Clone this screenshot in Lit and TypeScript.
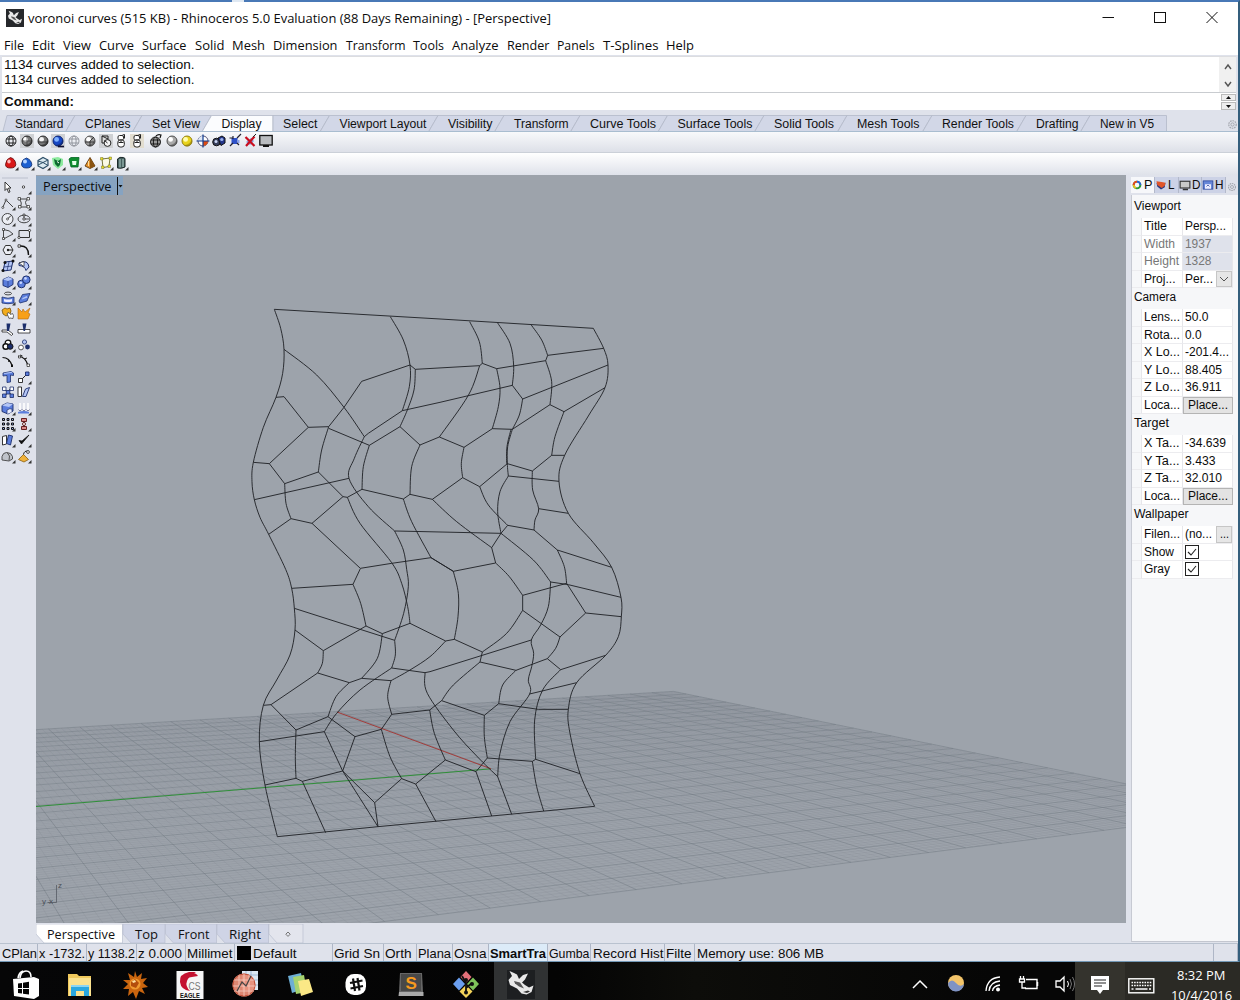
import { LitElement, html, svg, css, nothing } from "lit";
import { customElement } from "lit/decorators.js";

type Pt = [number, number];

/* One line of text set to an exact width. */
const fit = (s: string, w: number, size = 12, h = 16, cls = "") => html`<svg
  class="fit ${cls}" width=${w} height=${h} viewBox="0 0 ${w} ${h}"><text x="0" y=${h / 2 + size * 0.36}
  font-size=${size} textLength=${w} lengthAdjust="spacingAndGlyphs">${s}</text></svg>`;

const icon = (body: unknown, size = 16) => html`<svg class="icon" width=${size} height=${size} viewBox="0 0 16 16">${body}</svg>`;

/* ---------- small drawing parts ---------- */
const ball = (fill: string, hi: string, dark = "#222") => svg`
  <circle cx="8" cy="8" r="5" fill=${fill} stroke=${dark} stroke-width="0.9"/>
  <path d="M5 12.300A5 5 0 0 0 12.600 6.200Q12 11 5 12.300Z" fill=${dark} opacity=".55"/>
  <ellipse cx="6.600" cy="6.400" rx="2.400" ry="2.300" fill=${hi}/>`;
const globe = (c: string) => svg`<g fill="none" stroke=${c} stroke-width="0.9">
  <circle cx="8" cy="8" r="5"/><ellipse cx="8" cy="8" rx="2.100" ry="5"/><path d="M3.400 6h9.200M3.400 10h9.200"/></g>`;
const pressed = svg`<rect x="1" y="1" width="14" height="14" fill="#cfd1d4"/>`;
const corner = svg`<path d="M15.500 12v3.500H12z" fill="#333"/>`;
const capsules = svg`<g fill="#fff" stroke="#222" stroke-width="1">
  <rect x="5" y="2.500" width="5.500" height="4.500" rx="1.500"/><rect x="4.800" y="7" width="6.500" height="7" rx="2.400"/><path d="M5.500 9.500h5M8 7v2.500M9.500 2l2-.5v4" fill="none"/></g>`;

const displayIcons = [
  globe("#111"),
  svg`${pressed}${ball("#777", "#fff")}<path d="M8 3v10M3 8h10" stroke="#333" stroke-width=".6"/>`,
  svg`${ball("#777", "#f4f4f4")}<path d="M3 9h10" stroke="#222" stroke-width=".7"/>`,
  svg`${pressed}${ball("#1747c4", "#7fb0ff", "#0a1f66")}<path d="M8 13.500h6" stroke="#113" stroke-width="1.600"/>`,
  globe("#8b8f96"),
  svg`${ball("#9a9a9a", "#fff", "#444")}<path d="M8 8l4-4M8 8v5M3 9h9" stroke="#222" stroke-width=".8"/>`,
  svg`${pressed}<path d="M4 3h6v7H4z" fill="#ddd" stroke="#222"/><path d="M4 3l6 3" stroke="#222"/><circle cx="9.500" cy="10" r="3.400" fill="#f4f4f4" stroke="#222"/><path d="M9.500 10l-3-2.500" stroke="#222"/>`,
  capsules,
  svg`<rect x="1" y="1" width="14" height="14" fill="#e2ddcf"/>${capsules}`,
];
const displayIcons2 = [
  svg`<circle cx="7.500" cy="9" r="5" fill="#999"/><g transform="translate(-.5 1)">${globe("#111")}</g><path d="M8 3q2-2 5-1l-1 3" fill="none" stroke="#111" stroke-width="1.200"/>`,
  svg`${ball("#aaa", "#fff", "#444")}`,
  svg`${ball("#e8d31c", "#fffcae", "#8a7608")}`,
  svg`<circle cx="8" cy="8" r="5" fill="#fff" stroke="#557"/><path d="M8 8V3A5 5 0 0 0 3 8z" fill="#dde6f5"/><path d="M8 8v5a5 5 0 0 0 5-5z" fill="#dc4b12"/><path d="M8 1.500v13M1.500 8h13" stroke="#123c8f" stroke-width="1.200"/>`,
  svg`<circle cx="5.500" cy="9" r="3.800" fill="#39415e" stroke="#111"/><circle cx="5" cy="8.500" r="1.500" fill="#cdd8f5"/><path d="M7 5l4-2 3 2v5l-4 2.500z" fill="#24368a" stroke="#111"/><circle cx="10.800" cy="6.500" r="1.600" fill="#9db3ec"/>`,
  svg`<path d="M4.500 5h6v6h-6z" fill="#2e51c8"/><path d="M10 5l4-4M2.500 5h3M3 13l3-3M6 3v3M10 10l2 2" stroke="#223" stroke-width="1.200"/><path d="M11 7h1.500v3H11z" fill="#8aa4ef"/>`,
  svg`<path d="M4 9l4 3 4-4-3-3z" fill="#8aa0dc"/><path d="M3.500 4l9 9M12.500 3.500L4 13" stroke="#c80d1e" stroke-width="2.200"/><path d="M11 4l3-3" stroke="#222"/>`,
  svg`<rect x="1.800" y="2.500" width="12.400" height="9.500" fill="#b9bcc0" stroke="#111" stroke-width="1.300"/><path d="M5 14h6v-2H5z" fill="#111"/>`,
];
const shadeIcons = [
  svg`<path d="M7.500 2.500Q12.500 4 12.800 9.500Q12.500 13 7.500 13T2.500 9.500Q3 4 7.500 2.500Z" fill="#d91818" stroke="#5e0808" stroke-width=".8"/><ellipse cx="6" cy="6.500" rx="1.700" ry="2" fill="#ffb9b9"/>`,
  svg`<path d="M7.500 3Q12.500 5 12.800 9.500Q12.500 13 7.500 13T2.500 9Q3 4 7.500 3Z" fill="#1c5fd0" stroke="#0a2767" stroke-width=".8"/><ellipse cx="6" cy="6.500" rx="2" ry="1.900" fill="#b3d2ff"/>`,
  svg`<path d="M3 5.500l5-3 5 2.500v5.500l-5 3-5-2.500z" fill="#dbe9f0" stroke="#2e4f68" stroke-width="1.200"/><path d="M3 10l10-5M3 6l5 1.500 5 3" stroke="#2e4f68" fill="none"/>`,
  svg`<path d="M2 3l6-1 5 2v6l-5 4-5-4z" fill="#8dea9f"/><path d="M4 4l4 2 3-2-1 6-2 2-3-3z" fill="#0d6b31"/><path d="M7 6.500l2 1.500" stroke="#fff"/>`,
  svg`<path d="M3 4l2-1.500h8L12 12H5z" fill="#0f8d2f" stroke="#062" stroke-width=".8"/><path d="M6 6h4.500l-.5 4H6.500z" fill="#e4ffe9"/>`,
  svg`<path d="M8 2.500l5 8.500-5 2.500-5-2.500z" fill="#e3902a" stroke="#4a2b08" stroke-width=".8"/><path d="M8 2.500v11l5-2.500z" fill="#8a5412"/><path d="M6.500 6v5" stroke="#ffdd9b"/>`,
  svg`<path d="M4 4l8-1-1 8.500-6 1z" fill="#fbfae4" stroke="#55540e" stroke-width=".8"/><g fill="#e8e02a" stroke="#55540e" stroke-width=".4"><path d="M2.500 2.500H5V5H2.500zM11 2h2.500v2.500H11zM3.500 11H6v2.500H3.500zM10 10h2.500v2.500H10z"/></g>`,
  svg`<path d="M4.500 4q2-2.500 6-1.500l1.500 1v8.500q-3.500 2-7.500 1z" fill="#46605f" stroke="#1c2a2a"/><path d="M7 4v8.500M10 4v8" stroke="#a8c6c0" stroke-width="1.100"/>`,
];

const blue = "#5b7ddc", lb = "#b4c6f6", nv = "#1c2e6b";
const toolIcons = [
  svg`<path d="M5 3v8.500l2-2 1.500 4 1.500-.6L8.500 9H11z" fill="#fff" stroke="#222" stroke-width=".9"/>`,
  svg`<circle cx="7.500" cy="8" r="1.200" fill="#fff" stroke="#222" stroke-width=".8"/>${corner}`,
  svg`<path d="M2.500 13l3.500-8 7 7" fill="none" stroke="#333" stroke-width=".9"/><circle cx="6" cy="5" r="1" fill="#fff" stroke="#222" stroke-width=".7"/><circle cx="2.800" cy="12.500" r="1" fill="#fff" stroke="#222" stroke-width=".7"/>${corner}`,
  svg`<path d="M4 4h8Q7 7 12 12H4Q7 8 3 4" fill="none" stroke="#333" stroke-width=".9"/><g fill="#fff" stroke="#222" stroke-width=".7"><path d="M2 2.500h2.500V5H2zM11 2.500h2.500V5H11zM2.500 10.500H5V13H2.500zM11 10.500h2.500V13H11z"/></g>${corner}`,
  svg`<circle cx="7.500" cy="8" r="5.500" fill="#eceef4" stroke="#333" stroke-width=".9"/><path d="M7.500 8l3.500-3.500" stroke="#222"/><circle cx="7.500" cy="8" r="1" fill="#fff" stroke="#222" stroke-width=".7"/>${corner}`,
  svg`<ellipse cx="8" cy="8" rx="6" ry="3.800" fill="none" stroke="#333" stroke-width=".9"/><path d="M8 4v4h5" fill="none" stroke="#333" stroke-width=".8"/><circle cx="8" cy="8" r="1.200" fill="#fff" stroke="#222" stroke-width=".8"/><circle cx="8" cy="4" r="1.100" fill="#fff" stroke="#222" stroke-width=".8"/>${corner}`,
  svg`<path d="M3.500 13V3.500Q10 4 13 8L3.500 13" fill="none" stroke="#333" stroke-width=".9"/><path d="M2.500 2.500h2v2h-2zM2.500 11.500h2v2h-2z" fill="#fff" stroke="#222" stroke-width=".7"/>${corner}`,
  svg`<path d="M3 4.500h10.500v7H3z" fill="none" stroke="#333"/><circle cx="3" cy="11.500" r="1.100" fill="#fff" stroke="#222" stroke-width=".8"/><circle cx="13.500" cy="4.500" r="1.100" fill="#fff" stroke="#222" stroke-width=".8"/>${corner}`,
  svg`<path d="M3 8l2.500-4.500h5L13 8l-2.500 4.500h-5z" fill="#eceef4" stroke="#333"/><path d="M8 8h5" stroke="#222"/><circle cx="8" cy="8" r="1.200" fill="#222"/>${corner}`,
  svg`<path d="M4 4Q12.500 3.500 12.500 13" fill="none" stroke="#111" stroke-width="1.400"/><path d="M2 2.800h2.400v2.400H2z" fill="#fff" stroke="#222" stroke-width=".8"/>${corner}`,
  svg`<path d="M5 4l8-1-2 9-8 1z" fill=${lb} stroke=${nv}/><path d="M9 4L7 13M4 9l8-1" stroke=${nv} stroke-width=".7"/><g fill="#111"><circle cx="5" cy="4.500" r="1.500"/><circle cx="13" cy="3" r="1.500"/><circle cx="3" cy="12.500" r="1.500"/></g>${corner}`,
  svg`<path d="M3 5Q12 1 13 9L10 12.500Q9 8 3 7.500z" fill=${lb} stroke=${nv}/><path d="M3 5l5-1.500v5z" fill="#fff" stroke="#222" stroke-width=".7"/>${corner}`,
  svg`<path d="M3 5.500l5.500-2.500L13 5v5.500L8 13.500l-5-2z" fill=${blue} stroke=${nv} stroke-width=".9"/><path d="M3 5.500l5.500-2.500L13 5 8 7z" fill=${lb}/><path d="M8 7v6" stroke=${nv} stroke-width=".6"/>${corner}`,
  svg`<circle cx="5.500" cy="10" r="3.800" fill=${blue} stroke=${nv}/><circle cx="10.300" cy="5.700" r="3.800" fill=${blue} stroke=${nv}/><circle cx="4.800" cy="8.800" r="1.300" fill="#c9d7ff"/><circle cx="9.500" cy="4.400" r="1.300" fill="#c9d7ff"/>${corner}`,
  svg`<ellipse cx="8" cy="3.500" rx="3.500" ry="1.400" fill="none" stroke="#222" stroke-width=".8"/><path d="M2 7q6 2.500 12 0v6q-6 1.500-12 0z" fill=${blue} stroke=${nv} stroke-width=".8"/><path d="M4 9q4 1.200 8 0v2.500q-4 1-8 0z" fill="#eef"/>${corner}`,
  svg`<path d="M3 11l3.500-6.500 7.500-1-3 7.500-7 2z" fill=${blue} stroke=${nv} stroke-width=".8"/><path d="M6 9.500l5.500-2-.8-1.500L6.500 8z" fill=${lb}/>${corner}`,
  svg`<path d="M2 5l3-2 2 1 3-1 1 3-1 3-4 2-3-2z" fill="#f2ac1d" stroke="#7a5305" stroke-width=".8"/><path d="M7 8.500l2-1 1.500 2 2-1 1 2-.5 3-3-.5-1 .5z" fill="#fff" stroke="#444" stroke-width=".8"/>`,
  svg`<path d="M2 3l4 4 1-3 2 3 5-4-2 5 2 1-2 5H2z" fill="#f8a019" stroke="#b4660c" stroke-width=".6"/>`,
  svg`<path d="M2 9h6l5 4-1.500 1.500L7 11H2z" fill="#fff" stroke="#222" stroke-width=".8"/><path d="M6.500 2.500h4L9 10H7z" fill=${nv}/>`,
  svg`<path d="M2 8.500h12V12H2z" fill="#fff" stroke="#222" stroke-width=".8"/><path d="M6.500 2.500h4L9 10H7.500z" fill=${nv}/>`,
  svg`<circle cx="8" cy="6" r="2.800" fill="#fff" stroke="#111" stroke-width="1.300"/><circle cx="5.800" cy="9.500" r="2.800" fill="#fff" stroke="#111" stroke-width="1.500"/><circle cx="10.200" cy="9.500" r="2.800" fill=${nv} stroke="#111"/>${corner}`,
  svg`<circle cx="8.500" cy="5" r="2.100" fill=${lb} stroke=${nv} stroke-width=".8"/><circle cx="5" cy="10.500" r="2.400" fill="#fff" stroke="#333" stroke-width=".8"/><circle cx="11.500" cy="10" r="2.400" fill=${nv}/>`,
  svg`<path d="M2.500 4.500q7 0 9.500 8" fill="none" stroke="#111" stroke-width="1.200"/><circle cx="9" cy="8" r="1" fill="#111"/><path d="M11 11.500h2V14h-2z" fill="#111"/>`,
  svg`<path d="M2 3q8 1 10 10" fill="none" stroke="#111" stroke-width="1.200"/><path d="M4 2l2.500 1M8 6l3-1" stroke="#222"/><path d="M2.500 3h2v2h-2zM11 11h2.500v2.500H11z" fill="#fff" stroke="#222" stroke-width=".7"/>`,
  svg`<path d="M3 4l8-1.500 2.500 1.500v2.500l-3-.5v7l-3.500.5V6.500l-4 .5z" fill=${blue} stroke=${nv} stroke-width=".8"/><path d="M3.500 4.200l8-1.400 1 .9-8 1.400z" fill=${lb}/>`,
  svg`<path d="M5 11l6-6" stroke="#222"/><path d="M2.500 9.500h4V13.500h-4z" fill="#fff" stroke="#222" stroke-width=".9"/><path d="M9.500 3h3.500v3.500H9.500z" fill=${blue} stroke=${nv} stroke-width=".9"/>${corner}`,
  svg`<path d="M4 5l8 6M11 4l-6 8" stroke="#222"/><g stroke=${nv} stroke-width=".8"><path d="M2.500 3H6v3.500H2.500zM10 3h3.500v3.500H10z" fill="#fff"/><path d="M6.300 6.500h3.500V10H6.300zM2.500 10H6v3.500H2.500zM10 10h3.500v3.500H10z" fill=${blue}/></g>`,
  svg`<path d="M2 3h3.500v9.500H2z" fill="#fff" stroke="#222" stroke-width=".9"/><path d="M9.500 5l4-1.500-3.500 9H6.500z" fill=${lb} stroke=${nv} stroke-width=".9"/>`,
  svg`<path d="M2 5.500L7 3l6 1v7l-5 3-6-2.500z" fill=${blue} stroke=${nv} stroke-width=".9"/><path d="M2 5.500L7 3l6 1-4 3z" fill=${lb}/><path d="M7 14v-4q3-2 5-1v3" fill="#e7ecff" stroke=${nv} stroke-width=".7"/>${corner}`,
  svg`<path d="M2 12q6-2 11 0v1.500H2z" fill=${blue}/><path d="M4 3v7M8 3v7M12 3v7" stroke="#fff" stroke-width="1.600"/><path d="M2.500 9.500L4 11l1.500-1.500M6.500 9.500L8 11l1.500-1.500M10.500 9.500L12 11l1.500-1.500" stroke="#668" fill="none" stroke-width=".8"/>${corner}`,
  svg`<g fill="#8ea5e6" stroke="#111" stroke-width="1"><path d="M2.500 2.500h2v2h-2zM7 2.500h2v2H7zM11.500 2.500h2v2h-2zM2.500 7h2v2h-2zM7 7h2v2H7zM11.500 7h2v2h-2zM2.500 11.500h2v2h-2zM7 11.500h2v2H7zM11.500 11.500h2v2h-2z"/></g>${corner}`,
  svg`<path d="M8 2v12" stroke="#222"/><path d="M5.500 2.500h5v3h-5zM5.500 10.500h5v3h-5z" fill="#d98888" stroke="#5a1010" stroke-width=".9"/><circle cx="8" cy="8" r="1.500" fill="#fff" stroke="#5a1010" stroke-width=".9"/>${corner}`,
  svg`<path d="M2.500 4.500l4-1v8.500l-4 1z" fill="#fff" stroke="#222" stroke-width=".9"/><path d="M8.500 3l4 1-2 9-4-1.500z" fill=${blue} stroke=${nv} stroke-width=".9"/>${corner}`,
  svg`<path d="M3 8.500l2.500 3.500 7.500-9-7 6z" fill="#111" stroke="#111" stroke-width=".8"/>${corner}`,
  svg`<path d="M2 8.500q1-4 4.500-4 5 0 6 4v2.500l-3.500 2-7-1z" fill="#bfc3ca" stroke="#444" stroke-width=".9"/><path d="M7 4.500q4 3 2 8" stroke="#555" fill="none"/>${corner}`,
  svg`<path d="M2.500 11.500l5-5 5 5-4.500 2.500z" fill="#f0b23a" stroke="#8a5f10" stroke-width=".8"/><path d="M7.500 6.500q.5-4 5-3.500" fill="none" stroke="#222" stroke-width="1"/><circle cx="12" cy="4" r="1.400" fill="#fff" stroke="#222" stroke-width=".8"/>${corner}`,
];

/* ---------- ground grid ---------- */
const O: Pt = [491, 768.5], VA: Pt = [3577, 517], VB: Pt = [-180, 517];
const SA = 0.149, SB = 0.293, HALF = 70;
const ground = (u: number, v: number): Pt => {
  const a = (u / HALF) * SA, b = (v / HALF) * SB, w = 1 + a + b;
  return [(O[0] + a * VA[0] + b * VB[0]) / w, (O[1] + a * VA[1] + b * VB[1]) / w];
};
const seg = (p: Pt, q: Pt) => `M${p[0].toFixed(1)} ${p[1].toFixed(1)}L${q[0].toFixed(1)} ${q[1].toFixed(1)}`;
let minor = "", major = "";
for (let i = -HALF; i <= HALF; i++) {
  const d = seg(ground(i, -HALF), ground(i, HALF)) + seg(ground(-HALF, i), ground(HALF, i));
  if (i % 5 === 0) major += d; else minor += d;
}

/* ---------- voronoi curves, in thirds of a pixel from (240,300) ---------- */
const straight = `103,28 600,57 1060,85|112,1610 414,1580 1064,1519|365,244 510,195 526,208 719,197|365,244 312,322 266,380|
487,332 600,307 817,256|108,292 132,290 205,382 266,380|205,382 88,491|40,487 88,491 134,551 235,516 309,590 322,592 366,568|
266,385 388,436 480,380 540,435 598,411|366,568 490,597 510,583 577,598|487,332 385,400 373,410|43,599 327,535|464,693 783,700|
86,703 153,656 216,670 309,590|216,670 361,805 455,790 573,773 640,814|719,197 727,190 770,206 917,182 923,166 1091,145|
757,386 817,388 930,314 972,335 1095,263|817,256 848,297 1104,195|974,466 935,466 877,513 802,491 719,560 668,533 577,598|
805,528 957,544|803,676 882,690 952,750 1115,802|896,626 985,640|598,411 672,442 757,386|803,676 783,700 755,743 767,789 640,814|
848,886 980,850|932,846 985,854 1143,892|848,886 848,931 960,1011|980,850 1037,939 1144,950|1037,939 960,1011|
922,1076 962,1109 1097,1066|922,1076 828,1111 720,1086 727,1056 643,1018 617,1023 510,970|874,1020 570,1115 555,1118 455,1104|
869,1182 1010,1148|605,1202 733,1246 776,1211 895,1228 985,1228|742,1374 877,1384 887,1378 1020,1421|742,1374 708,1415 616,1380|
708,1415 755,1548|773,1430 815,1543|605,1202 569,1230 455,1243 424,1288|616,1380 527,1452 485,1436|527,1452 588,1565|
361,806 339,853 155,865|378,978 250,1052 165,990|378,978 427,1001 510,970|70,1216 93,1214 233,1119 328,1148 365,1135 453,1142|
163,925 464,1021|93,1214 168,1290 264,1250 345,1310 424,1288|58,1325 253,1295|75,1455 168,1435 187,1444 308,1413|
187,1444 257,1598|345,1310 308,1413|253,1295 308,1413 414,1580|308,1413 404,1508 414,1580|404,1508 485,1436`;
const curved = `103,28 122,85 132,148 128,220 108,292 70,382 40,487 36,545 43,599 60,652 86,703 137,808 155,865 163,925 165,990 150,1065 110,1140 70,1216 58,1325 75,1455 112,1610|
1060,85 1091,145 1104,195 1095,263 1045,348 974,466 957,544 985,640 1060,728 1115,802 1143,892 1144,950 1135,1010 1097,1066 1010,1148 985,1228 990,1300 1020,1421 1064,1519|
451,50 490,120 510,195 508,260 487,332|526,208 522,270 502,330 480,380|132,148 230,225 312,322 373,410|266,380 245,450 235,516|
388,436 370,500 366,568|540,435 515,500 510,583|373,410 343,475 327,535 385,620 464,693|322,592 360,670 455,788 485,850 503,920 510,970|
490,597 515,665 573,773|134,551 138,610 153,656|464,693 490,750 500,808 505,860 491,940 464,1021|689,65 718,125 727,190|
719,197 685,286 598,411|773,69 810,130 821,198 817,256|873,74 905,120 923,166|770,206 780,264 775,320 757,386|917,182 935,245 930,314|
848,297 838,345 817,388|972,335 945,410 935,466|817,388 803,440 802,491 805,528|813,388 801,440 800,491|805,528 780,575 773,635 783,700|
719,560 745,615 803,676|877,513 878,570 896,626 885,660 882,690|672,442 664,490 668,533|577,598 650,665 755,743|573,773 640,814|
783,700 880,780 932,846|952,750 973,800 980,850|640,814 655,880 654,950 643,1018|767,789 808,830 848,886|848,931 800,1000 727,1056|
617,1023 570,1070 510,1110 453,1142|932,846 925,920 902,975 874,1020 881,1060 875,1100 865,1140 869,1182 810,1265 780,1360 773,1430|
960,1011 947,1045 922,1076|962,1109 908,1170 884,1260 887,1378|828,1111 788,1155 776,1211|720,1086 640,1155 605,1202|733,1246 733,1310 742,1374|
877,1384 890,1460 911,1533|555,1118 562,1180 640,1290 710,1368 773,1430|569,1230 583,1300 616,1380|339,853 362,910 378,978|
250,1052 247,1090 233,1119|427,1001 412,1075 365,1135|464,1021 466,1065 455,1104|455,1104 360,1170 290,1240 253,1295|
328,1148 288,1190 264,1250|453,1142 443,1190 455,1243|168,1290 166,1370 168,1435|424,1288 450,1370 485,1436`;
const parse = (s: string): Pt[][] => s.split("|").map(l => l.trim().split(/\s+/).map(p => p.split(",").map(Number) as Pt));
const poly = (p: Pt[]) => "M" + p.map(q => q.join(" ")).join("L");
const smooth = (p: Pt[]) => {
  let d = `M${p[0]}`;
  for (let i = 0; i < p.length - 1; i++) {
    const a = p[Math.max(0, i - 1)], b = p[i], c = p[i + 1], e = p[Math.min(p.length - 1, i + 2)];
    d += `C${b[0] + (c[0] - a[0]) / 6},${b[1] + (c[1] - a[1]) / 6} ${c[0] - (e[0] - b[0]) / 6},${c[1] - (e[1] - b[1]) / 6} ${c}`;
  }
  return d;
};
const cells = parse(straight).map(poly).join("") + parse(curved).map(smooth).join("");

/* ---------- data ---------- */
const menus: [string, number][] = [["File", 20], ["Edit", 23], ["View", 28], ["Curve", 35], ["Surface", 44.5], ["Solid", 29.5], ["Mesh", 33],
  ["Dimension", 64.5], ["Transform", 59.5], ["Tools", 31], ["Analyze", 46.5], ["Render", 42.5], ["Panels", 37.5], ["T-Splines", 55.5], ["Help", 28]];
/* label, text start, text width */
const tabs: [string, number, number][] = [["Standard", 15, 48.5], ["CPlanes", 85, 45.5], ["Set View", 152, 48], ["Display", 221.5, 40], ["Select", 283, 34.5],
  ["Viewport Layout", 339.5, 87], ["Visibility", 448, 44.5], ["Transform", 514, 54.5], ["Curve Tools", 590, 66], ["Surface Tools", 677.5, 75],
  ["Solid Tools", 774, 60], ["Mesh Tools", 857, 62.5], ["Render Tools", 942, 72], ["Drafting", 1036, 42.5], ["New in V5", 1100, 54]];
type Row = { l: string; lw: number; v?: string; vw?: number; kind?: string };
const sections: { title: string; w: number; rows: Row[] }[] = [
  { title: "Viewport", w: 47, rows: [{ l: "Title", lw: 23, v: "Persp...", vw: 41 }, { l: "Width", lw: 31, v: "1937", vw: 26.5, kind: "off" },
    { l: "Height", lw: 35, v: "1328", vw: 26.5, kind: "off" }, { l: "Proj...", lw: 31.5, v: "Per...", vw: 28, kind: "drop" }] },
  { title: "Camera", w: 42, rows: [{ l: "Lens...", lw: 36, v: "50.0", vw: 23.5 }, { l: "Rota...", lw: 36, v: "0.0", vw: 16.5 }, { l: "X Lo...", lw: 36, v: "-201.4...", vw: 44 },
    { l: "Y Lo...", lw: 36, v: "88.405", vw: 37 }, { l: "Z Lo...", lw: 36, v: "36.911", vw: 36.5 }, { l: "Loca...", lw: 36, v: "Place...", vw: 40, kind: "button" }] },
  { title: "Target", w: 35, rows: [{ l: "X Ta...", lw: 35.5, v: "-34.639", vw: 41 }, { l: "Y Ta...", lw: 35.5, v: "3.433", vw: 30.5 }, { l: "Z Ta...", lw: 35.5, v: "32.010", vw: 37 },
    { l: "Loca...", lw: 36, v: "Place...", vw: 40, kind: "button" }] },
  { title: "Wallpaper", w: 54.5, rows: [{ l: "Filen...", lw: 36, v: "(no...", vw: 27, kind: "browse" }, { l: "Show", lw: 30, kind: "check" }, { l: "Gray", lw: 26, kind: "check" }] },
];
/* label, cell width, text width, variant */
const status: [string, number, number, string?][] = [["CPlan", 37.5, 35], ["x -1732.", 49, 46], ["y 1138.2", 50, 47], ["z 0.000", 49, 44], ["Millimet", 49.5, 45.5],
  ["Default", 97.5, 43.5, "layer"], ["Grid Sn", 51, 46], ["Orth", 33, 26.5], ["Plana", 36, 33], ["Osna", 36, 32.5], ["SmartTra", 59, 56, "on"], ["Gumba", 43.5, 40.5],
  ["Record Hist", 73.5, 70.5], ["Filte", 30.5, 25.5], ["Memory use: 806 MB", 518.5, 127], ["", 24, 1]];
const gear = svg`<circle cx="8" cy="8" r="4.600" fill="none" stroke="#a3a6ae" stroke-width="1.500" stroke-dasharray="2 1"/><circle cx="8" cy="8" r="2" fill="none" stroke="#a3a6ae" stroke-width="1.200"/>`;

/* ---------- taskbar pictures, 32 x 32 boxes ---------- */
const big = (b: unknown) => html`<svg class="icon" width="32" height="32" viewBox="0 0 32 32">${b}</svg>`;
const rhino = svg`<path d="M4.500 3L9 5l3 1.500L14 11l4-4 5-1.500-3 6-3 3 3 2.500 4 2.500 4.500-2-2 6.500-5 2.500-5-1-4.500-5L5 17l-1.500-5L7 8z" fill="#e8e8e8"/><path d="M9 13l6 1.500 4 6-5-2-4-3z" fill="#555"/><path d="M18 24l5-1.500 2 1-3 1.500z" fill="#333"/>`;
const apps = [
  big(svg`<path d="M3 11l21-2 5 2v17l-5 3L4 28z" fill="#fff"/><path d="M10 10Q11 3 16 3t5 6M8 10q1-6 5-7" fill="none" stroke="#fff" stroke-width="1.600"/><path d="M8 15.500l4-.6V20H8zM13 14.700l6-.9V20h-6zM8 21h4v4.500l-4-.6zM13 21h6v5.500l-6-.8z" fill="#050505"/>`),
  big(svg`<path d="M4 6h9l2 2h12v20H4z" fill="#f0c95c"/><path d="M5 10h22v18H5z" fill="#fbe28f"/><path d="M7 17h18v11h-5v-5h-8v5H7z" fill="#29a7df"/><path d="M7 17h18v2H7z" fill="#8bd5f3"/>`),
  big(svg`<path d="M16 3l2 6 5-4-1 6 6-1-4 5 5 4-6 1 3 6-6-3-3 8-3-7-5 4 1-7-6 0 5-5-5-4 7 0-2-7 6 4z" fill="#c9650f"/><circle cx="16" cy="16" r="5.500" fill="#f09a30"/><path d="M12 14l4-3 4 4-3 5-5-2z" fill="#b34d0c"/><path d="M13 13l3-1 1 2-3 1z" fill="#ffe2a1"/>`),
  html`<svg class="icon" width="32" height="32" viewBox="0 0 32 32"><rect x="2.500" y="3" width="27" height="28" fill="#f6f6f6"/><path d="M15 4Q5 6 6 14t10 9q-5-5-3-10t9-9z" fill="#c41230"/><path d="M16 5q5-1 8 3l-9 1.500z" fill="#c41230"/><text x="14.500" y="21.500" font-size="10" textLength="12" lengthAdjust="spacingAndGlyphs" fill="#777" font-family="Liberation Sans">CS</text><text x="6" y="30" font-size="7" font-weight="700" textLength="20" lengthAdjust="spacingAndGlyphs" fill="#111" font-family="Liberation Sans">EAGLE</text></svg>`,
  big(svg`<path d="M13 3h16v19H13z" fill="#dce8f3"/><path d="M13 7h16M13 12h16M13 17h16M17 3v19M22 3v19" stroke="#88a8cc" stroke-width=".7"/><circle cx="15" cy="17" r="11.500" fill="#e98e78" opacity=".95"/><circle cx="15" cy="17" r="11" fill="none" stroke="#c25038"/><path d="M5 12h20M4 18h22M5 23h20M10 7v20M15 6v22M20 7v20" stroke="#f8cfc4" stroke-width=".8"/><path d="M8 23l5-9 4 4 5-10" fill="none" stroke="#444" stroke-width="1.200"/>`),
  big(svg`<path d="M4 8l13-3 3 16-12 4z" fill="#6daed5"/><path d="M9 9l11-2 3 17-11 2z" fill="#a7d46f"/><path d="M14 13l11-2 4 13-12 4z" fill="#fbe886"/>`),
  big(svg`<rect x="5.500" y="6" width="20.500" height="21" rx="8.500" fill="#fff"/><path d="M13 10.500l2 12.500M17.500 10l2 12.500M10 15l12.500-2.500M10.500 20.500l12.500-2.500" stroke="#111" stroke-width="2.200"/>`),
  html`<svg class="icon" width="32" height="32" viewBox="0 0 32 32"><path d="M5 5h22l1 19H4z" fill="#666"/><path d="M4 24h24.500v4H3.500z" fill="#aaa"/><path d="M6 6h20v17H6z" fill="#484848"/><text x="10.500" y="20.500" font-size="17" font-weight="700" fill="#f79a1e" font-family="Liberation Sans">S</text></svg>`,
  big(svg`<path d="M16 3l5.500 6-5.500 6-5.500-6z" fill="#e5707a"/><path d="M9 9.500l6 6.500-6 6.500L3 16z" fill="#6b9ff0"/><path d="M23 9.500l6 6.500-6 6.500-6-6.500z" fill="#7fc55b"/><path d="M16 17l6.500 6.500L16 30l-6.500-6.500z" fill="#f4d35a"/><path d="M12 8l4 7v10M16 20l6-5" fill="none" stroke="#111" stroke-width="1.800"/><g fill="#111"><circle cx="16" cy="12" r="2"/><circle cx="22" cy="16" r="2"/><circle cx="16" cy="24.500" r="2"/></g>`),
];

@customElement("app-root")
export class AppRoot extends LitElement {
  static styles = css`
    :host { display: block; width: 1240px; height: 1000px; overflow: hidden; color: #0c0c0c; font-family: "Liberation Sans", Arial, sans-serif; }
    svg { display: block; flex: none; }
    .fit { overflow: visible; }
    .fit text { fill: currentColor; }
    .ui { font-family: "Open Sans", "Noto Sans", sans-serif; }
    .bold text { font-weight: 700; }
    .screen { display: flex; flex-direction: column; width: 1240px; height: 1000px; background: #050606; }
    .window { display: flex; flex-direction: column; height: 962px; box-sizing: border-box; border-top: 2px solid #4878b6; border-right: 2px solid #345e7c; border-bottom: 1px solid #7398b6; background: #dfe2eb; position: relative; }
    .notch { position: absolute; left: 232px; top: -2px; width: 12px; height: 1.5px; background: #dfe8f2; }
    .title { display: flex; align-items: center; height: 33px; background: #fff; padding-left: 6px; gap: 4px; }
    .winbtns { display: flex; margin: -2px 0 0 auto; gap: 36px; padding-right: 18px; }
    .menu { display: flex; gap: 8px; align-items: center; height: 20px; padding-left: 4px; background: #fff; }
    .history { display: flex; height: 36px; margin: 1px 2px 0 2px; border-top: 1px solid #dcdde0; border-bottom: 1px solid #c9ccd0; background: #fff; justify-content: space-between; box-sizing: content-box; }
    .lines { display: flex; flex-direction: column; padding-left: 2px; }
    .scroll { display: flex; flex-direction: column; justify-content: space-between; width: 17px; background: #f0f0f0; align-items: center; padding: 4px 0 2px; box-sizing: border-box; }
    .command { display: flex; height: 17px; margin: 0 2px; background: #fff; align-items: center; justify-content: space-between; padding-left: 2px; }
    .command .bold { margin-top: -2px; }
    .spin { display: flex; flex-direction: column; width: 15px; height: 16px; gap: 1px; }
    .spin span { flex: 1; display: flex; align-items: center; justify-content: center; background: #eee; border: 1px solid #bbb; box-sizing: border-box; }
    .tabbar { display: flex; height: 21px; align-items: flex-end; justify-content: space-between; border-bottom: 1px solid #a9bdd0; background: #dfe2eb; }
    .tabbar text { font-size: 12px; }
    .tabbar .icon { margin-right: -1px; }
    .bar { display: flex; height: 21px; align-items: center; padding: 0 0 2px 3px; background: linear-gradient(#f8f9fb, #dde0e8); border-bottom: 1px solid #cbd0d8; box-sizing: border-box; }
    .bar.two { height: 22px; padding-bottom: 3px; background: linear-gradient(#fff, #dfe2ea); border: 0; }
    .bar .icon { margin-right: -.25px; }
    .bar .sep { margin-left: 3px; }
    .main { display: flex; height: 748px; }
    .tools { width: 36px; box-sizing: border-box; padding: 2px 2px 0 0; }
    .grip { height: 2px; width: 26px; margin-left: 2px; background: #cdd1dc; }
    .toolgrid { display: grid; grid-template-columns: 16px 16px; grid-auto-rows: 15.8px; }
    .view { position: relative; width: 1090px; height: 748px; background: #9da3ab; }
    .label { position: absolute; left: 0; top: 1px; height: 19px; width: 87px; background: #86a3c1; display: flex; align-items: center; padding-left: 6.5px; box-sizing: border-box; gap: 6px; }
    .side { width: 107px; margin-left: 5px; background: #dfe2eb; display: flex; flex-direction: column; }
    .sidetabs { display: flex; height: 16px; margin: 2px 0; font-size: 12px; }
    .sidetabs span { display: flex; align-items: center; background: #ccd2e6; width: 24px; border-right: 1px solid #b3b9cb; box-sizing: border-box; }
    .sidetabs span:first-child { background: #f6f7fa; }
    .sidetabs i { font-style: normal; display: flex; align-items: center; padding-left: 1px; }
    .sidetabs > i { padding-top: 3px; padding-left: 0; }
    .props { flex: none; height: 747px; background: #f6f7f9; border-left: 1px solid #c7cad3; border-bottom: 1px solid #c3c6cf; padding-top: 2px; box-sizing: border-box; }
    .head { height: 21px; display: flex; align-items: center; padding: 0 0 3px 2px; box-sizing: border-box; }
    .row { display: grid; grid-template-columns: 10px 41px 50px; height: 17.5px; }
    .row > span { background: #fff; border-bottom: 1px solid #ececef; border-right: 1px solid #e6e6ea; display: flex; align-items: center; padding-left: 2px; box-sizing: border-box; overflow: hidden; }
    .row > span:first-child { background: #f6f7f9; }
    .row > .off { background: #dfe2eb; }
    .grey { color: #777; }
    .row > .button { background: #e3e3e3; border: 1px solid #b4b4b4; padding-left: 4px; }
    .row > .split { padding-right: 0; justify-content: space-between; }
    .mini { width: 16px; height: 100%; background: #e6e6e6; border: 1px solid #c6c6c6; box-sizing: border-box; display: flex; align-items: center; justify-content: center; }
    .viewtabs { display: flex; flex: none; height: 20px; padding: 1px 0 0 36px; box-sizing: border-box; }
    .status { display: flex; height: 18px; flex: none; box-sizing: border-box; border-top: 1px solid #b9c2cf; }
    .status span { box-sizing: border-box; border-right: 1px solid #aeb6c6; padding-left: 1.5px; overflow: hidden; display: flex; align-items: center; flex: none; }
    .status .on { background: #dcebf8; }
    .swatch { width: 14px; height: 14px; margin: 1px 2px 0 0; background: #000; flex: none; }
    .task { display: flex; height: 38px; color: #fff; background: linear-gradient(90deg, #060607, #040404 45%, #0d0d0a 56%, #060606 80%); }
    .app { width: 55.1px; display: flex; justify-content: center; padding-top: 6px; box-sizing: border-box; flex: none; }
    .app.first { width: 52.500px; }
    .app.active { background: #303233; width: 54px; margin-left: 1px; }
    .tray { display: flex; margin: 0 -6px 0 auto; align-items: center; gap: 4.2px; padding-top: 6px; box-sizing: border-box; }
    .bright { display: flex; width: 165px; background: #2b2a25; align-items: center; }
    .note { width: 50px; height: 38px; background: #34332d; display: flex; align-items: center; justify-content: center; padding-top: 8px; box-sizing: border-box; }
    .keys { padding: 9px 0 0 3px; }
    .clock { display: flex; flex-direction: column; align-items: center; margin-left: 16px; height: 38px; padding-top: 5px; box-sizing: border-box; gap: 2.500px; }
  `;

  private slantTabs() {
    const line = "#b3b9c8";
    return html`<svg width="1180" height="16" viewBox="0 116 1180 16">
      ${tabs.map(([name, x, w], i) => {
        const on = name === "Display", next = tabs[i + 1];
        const right = next ? next[1] - 10 : 1166.5, base = next ? next[1] - 19 : 1166.5;
        const l = i === 0 ? 3 : name === "Select" ? 273 : x - 19, lt = i === 0 ? 7 : name === "Select" ? 273 : x - 10;
        const r = on ? 273 : right, rb = on ? 273 : base;
        return svg`<path d="M${l} 132L${lt} 116.500H${r}L${rb} 132" fill=${on ? "#fbfcfe" : "#d2d7e7"} stroke=${line} stroke-width=".8"/>
          <text x=${x} y="128.800" textLength=${w} lengthAdjust="spacingAndGlyphs" fill="#111">${name}</text>`;
      })}</svg>`;
  }

  private valueCell(r: Row) {
    switch (r.kind) {
      case "drop": return html`<span class="split">${fit(r.v!, r.vw!, 12)}<div class="mini"><svg width="8" height="6"><path d="M0 1l4 4 4-4" fill="none" stroke="#555"/></svg></div></span>`;
      case "browse": return html`<span class="split">${fit(r.v!, r.vw!, 12)}<div class="mini">${fit("...", 9, 12)}</div></span>`;
      case "button": return html`<span class="button">${fit(r.v!, r.vw!, 12)}</span>`;
      case "check": return html`<span><svg width="14" height="14"><rect x=".5" y=".5" width="13" height="13" fill="#fff" stroke="#222"/><path d="M3 7l3 3 5-6" fill="none" stroke="#222" stroke-width="1.100"/></svg></span>`;
      default: return html`<span class=${r.kind === "off" ? "off grey" : ""}>${fit(r.v!, r.vw!, 12)}</span>`;
    }
  }

  private sidebar() {
    const marks: [string, unknown][] = [
      ["P", svg`<circle cx="8" cy="8" r="4.500" fill="none" stroke="#2b9a3a" stroke-width="2.600"/><path d="M8 3.500a4.500 4.500 0 0 1 4.500 4.500" fill="none" stroke="#2962d8" stroke-width="2.600"/><path d="M3.500 8a4.500 4.500 0 0 1 4.500-4.500" fill="none" stroke="#e8451c" stroke-width="2.600"/><path d="M3.500 8a4.500 4.500 0 0 0 3 4" fill="none" stroke="#eebf1c" stroke-width="2.600"/>`],
      ["L", svg`<path d="M2 5l5 3 7-3-1 6-5 3-5-4z" fill="#26377f"/><path d="M2 3l7 1 5 1-1 4-4 3-6-4z" fill="#e0562a"/>`],
      ["D", svg`<rect x="1.500" y="3" width="13" height="9" fill="#c9c9c9" stroke="#333" stroke-width="1.500"/><path d="M5 14h7" stroke="#333" stroke-width="2"/>`],
      ["H", svg`<rect x="1.500" y="2.500" width="13" height="11" fill="#6787d8" stroke="#223f96"/><path d="M4 7h8v6H4z" fill="#eef"/><path d="M6 10l2-2 2 2" stroke="#223f96" fill="none"/>`],
    ];
    return html`<div class="side">
      <div class="sidetabs">${marks.map(([c, m]) => html`<span>${icon(m, 12)}<i>${fit(c, c === "L" ? 6.5 : 8.5, 12)}</i></span>`)}
        <i>${icon(gear, 12)}</i></div>
      <div class="props">${sections.map(s => html`<div class="head">${fit(s.title, s.w, 12)}</div>
        ${s.rows.map(r => html`<div class="row"><span></span><span class=${r.kind === "off" ? "grey" : ""}>${fit(r.l, r.lw, 12)}</span>${this.valueCell(r)}</div>`)}`)}</div>
    </div>`;
  }

  private viewport() {
    return html`<div class="view">
      <svg width="1090" height="748" viewBox="36 175 1090 748">
        <path d=${minor} fill="none" stroke="#808790" stroke-width=".5" opacity=".4"/>
        <path d=${major} fill="none" stroke="#6f767f" stroke-width=".75" opacity=".62"/>
        <path d="M36 806.500L491 768.800" stroke="#2f8f38" stroke-width="1"/>
        <path d="M337 712L491 768.800" stroke="#a33c3a" stroke-width="1"/>
        <g transform="translate(240 300) scale(.33333)"><path d=${cells} fill="none" stroke="#1d1f24" stroke-width="2.700"/></g>
        <path d="M56.500 885v17.500h-9" fill="none" stroke="#555b63" stroke-width=".8"/>
        <g font-size="8" fill="#4a5058"><text x="58" y="888">z</text><text x="42" y="904">y</text><text x="49" y="904">x</text></g>
      </svg>
      <div class="label">${fit("Perspective", 68.5, 12.5, 16, "ui")}<svg width="8" height="19"><path d="M.5 1v18" stroke="#111"/><path d="M1.500 9h4l-2 2.500z" fill="#111"/></svg></div>
    </div>`;
  }

  private bottomTabs() {
    const t: [string, number, number, number, number][] = [["Perspective", 36, 122.5, 47, 68], ["Top", 123, 165, 135, 23], ["Front", 165.5, 216.5, 178, 31.5], ["Right", 217, 268.5, 229, 32]];
    return html`<div class="viewtabs"><svg width="270" height="20" viewBox="36 924 270 20">
      ${t.map(([s, a, b, x, w], i) => svg`<path d="M${a} 924H${b}V943H${a + 8}L${a} 934z" fill=${i ? "#cfd4e6" : "#fff"} stroke="#b9bfd0" stroke-width=".7"/>
        <text class="ui" x=${x} y="939" font-size="12.500" textLength=${w} lengthAdjust="spacingAndGlyphs" fill="#111">${s}</text>`)}
      <path d="M269 924H303V943H277L269 934z" fill="#e3e5ed" stroke="#b9bfd0" stroke-width=".7"/>
      <path d="M288 932l2.200 2.200-2.200 2.200-2.200-2.200z" fill="none" stroke="#666" stroke-width=".9"/></svg></div>`;
  }

  private tray() {
    return html`<div class="tray">
      ${big(svg`<path d="M9 20l7-7 7 7" fill="none" stroke="#fff" stroke-width="1.500"/>`)}
      ${big(svg`<circle cx="16" cy="15" r="8" fill="#f3c46a"/><path d="M8 15q4-5 8 0t8 1a8 8 0 0 1-16-1z" fill="#7f93c4"/>`)}
      ${big(svg`<g fill="none" stroke="#fff" stroke-width="1.300"><path d="M9 23Q10 10 23 9"/><path d="M12 23q1-9 11-10"/><path d="M15.500 23q.5-5 7.500-6"/></g><circle cx="21" cy="21.500" r="2" fill="#fff"/>`)}
      ${big(svg`<path d="M13 11.500h11v9H12" fill="none" stroke="#fff" stroke-width="1.400"/><path d="M24.500 14v4" stroke="#fff" stroke-width="1.500"/><path d="M7.500 8v3M10.500 8v3M6.500 11h5v3h-5zM9 14v6h4" fill="none" stroke="#fff" stroke-width="1.300"/>`)}
      ${big(svg`<path d="M7 13h4l4-4v14l-4-4H7z" fill="none" stroke="#fff" stroke-width="1.300"/><path d="M18.500 13q2 3 0 6" stroke="#fff" fill="none"/><path d="M21 11q3 5 0 10M23.500 9q4 7 0 14" stroke="#777" fill="none"/>`)}
    </div>`;
  }

  render() {
    return html`<div class="screen">
      <div class="window">
        <div class="notch"></div>
        <div class="title">
          <svg width="18" height="18" viewBox="0 0 32 32"><rect width="32" height="32" fill="#26282b"/>${rhino}</svg>
          ${fit("voronoi curves (515 KB) - Rhinoceros 5.0 Evaluation (88 Days Remaining) - [Perspective]", 523, 12.5, 20, "ui")}
          <div class="winbtns">
            <svg width="16" height="16"><path d="M2.500 8.500h11.500" stroke="#111"/></svg>
            <svg width="16" height="16"><rect x="2.500" y="3.500" width="11" height="10" fill="none" stroke="#111"/></svg>
            <svg width="16" height="16"><path d="M2.500 3l11 11M13.500 3l-11 11" stroke="#111"/></svg>
          </div>
        </div>
        <div class="menu">${menus.map(([s, w]) => fit(s, w, 12.5, 18, "ui"))}</div>
        <div class="history"><div class="lines">${fit("1134 curves added to selection.", 190.5, 12.6, 15)}${fit("1134 curves added to selection.", 190.5, 12.6, 15)}</div>
          <div class="scroll"><svg width="8" height="10"><path d="M1 8l3-4 3 4" fill="none" stroke="#555" stroke-width="1.400"/></svg><svg width="8" height="12"><path d="M1 4l3 4 3-4" fill="none" stroke="#555" stroke-width="1.400"/></svg></div></div>
        <div class="command">${fit("Command:", 70, 12.8, 16, "bold")}
          <div class="spin"><span><svg width="5" height="3"><path d="M0 3l2.500-3L5 3z" fill="#111"/></svg></span><span><svg width="5" height="3"><path d="M0 0l2.500 3L5 0z" fill="#111"/></svg></span></div></div>
        <div class="tabbar">${this.slantTabs()}${icon(gear, 13)}</div>
        <div class="bar">${displayIcons.map(i => icon(i))}<div class="sep"></div>${displayIcons2.map(i => icon(i))}</div>
        <div class="bar two">${shadeIcons.map(i => icon(svg`${i}${corner}`))}</div>
        <div class="main">
          <div class="tools"><div class="grip"></div><div class="toolgrid">${toolIcons.map(i => icon(i))}</div></div>
          ${this.viewport()}
          ${this.sidebar()}
        </div>
        ${this.bottomTabs()}
        <div class="status">${status.map(([s, w, tw, k]) => html`<span class=${k ?? ""} style="width:${w}px">${k === "layer" ? html`<div class="swatch"></div>` : nothing}${s ? fit(s, tw, 13.5, 16, k === "on" ? "bold" : "") : nothing}</span>`)}</div>
      </div>
      <div class="task">
        ${apps.map((a, i) => html`<div class="app ${i === 0 ? "first" : ""}">${a}</div>`)}
        <div class="app active">${big(svg`<rect x="2" y="2" width="28" height="29" fill="#1d1f21"/>${rhino}`)}</div>
        ${this.tray()}
        <div class="bright">
          <div class="note"><svg width="20" height="20"><path d="M1 1h18v14h-6l-3 4-3-4H1z" fill="#fff"/><path d="M4 5h12M4 8h12M4 11h8" stroke="#222" stroke-width="1.200"/></svg></div>
          <svg class="keys" width="27" height="16"><rect x=".8" y=".8" width="25" height="14" fill="none" stroke="#fff" stroke-width="1.400"/><path d="M3.500 4.500h20M3.500 7.500h20" stroke="#fff" stroke-width="1.600" stroke-dasharray="1.600 1"/><path d="M3.500 11h2M7.500 11h12M21 11h2" stroke="#fff" stroke-width="1.600"/></svg>
          <div class="clock">${fit("8:32 PM", 48.5, 12.5, 17, "ui")}${fit("10/4/2016", 61, 12.5, 17, "ui")}</div>
        </div>
      </div>
    </div>`;
  }
}
